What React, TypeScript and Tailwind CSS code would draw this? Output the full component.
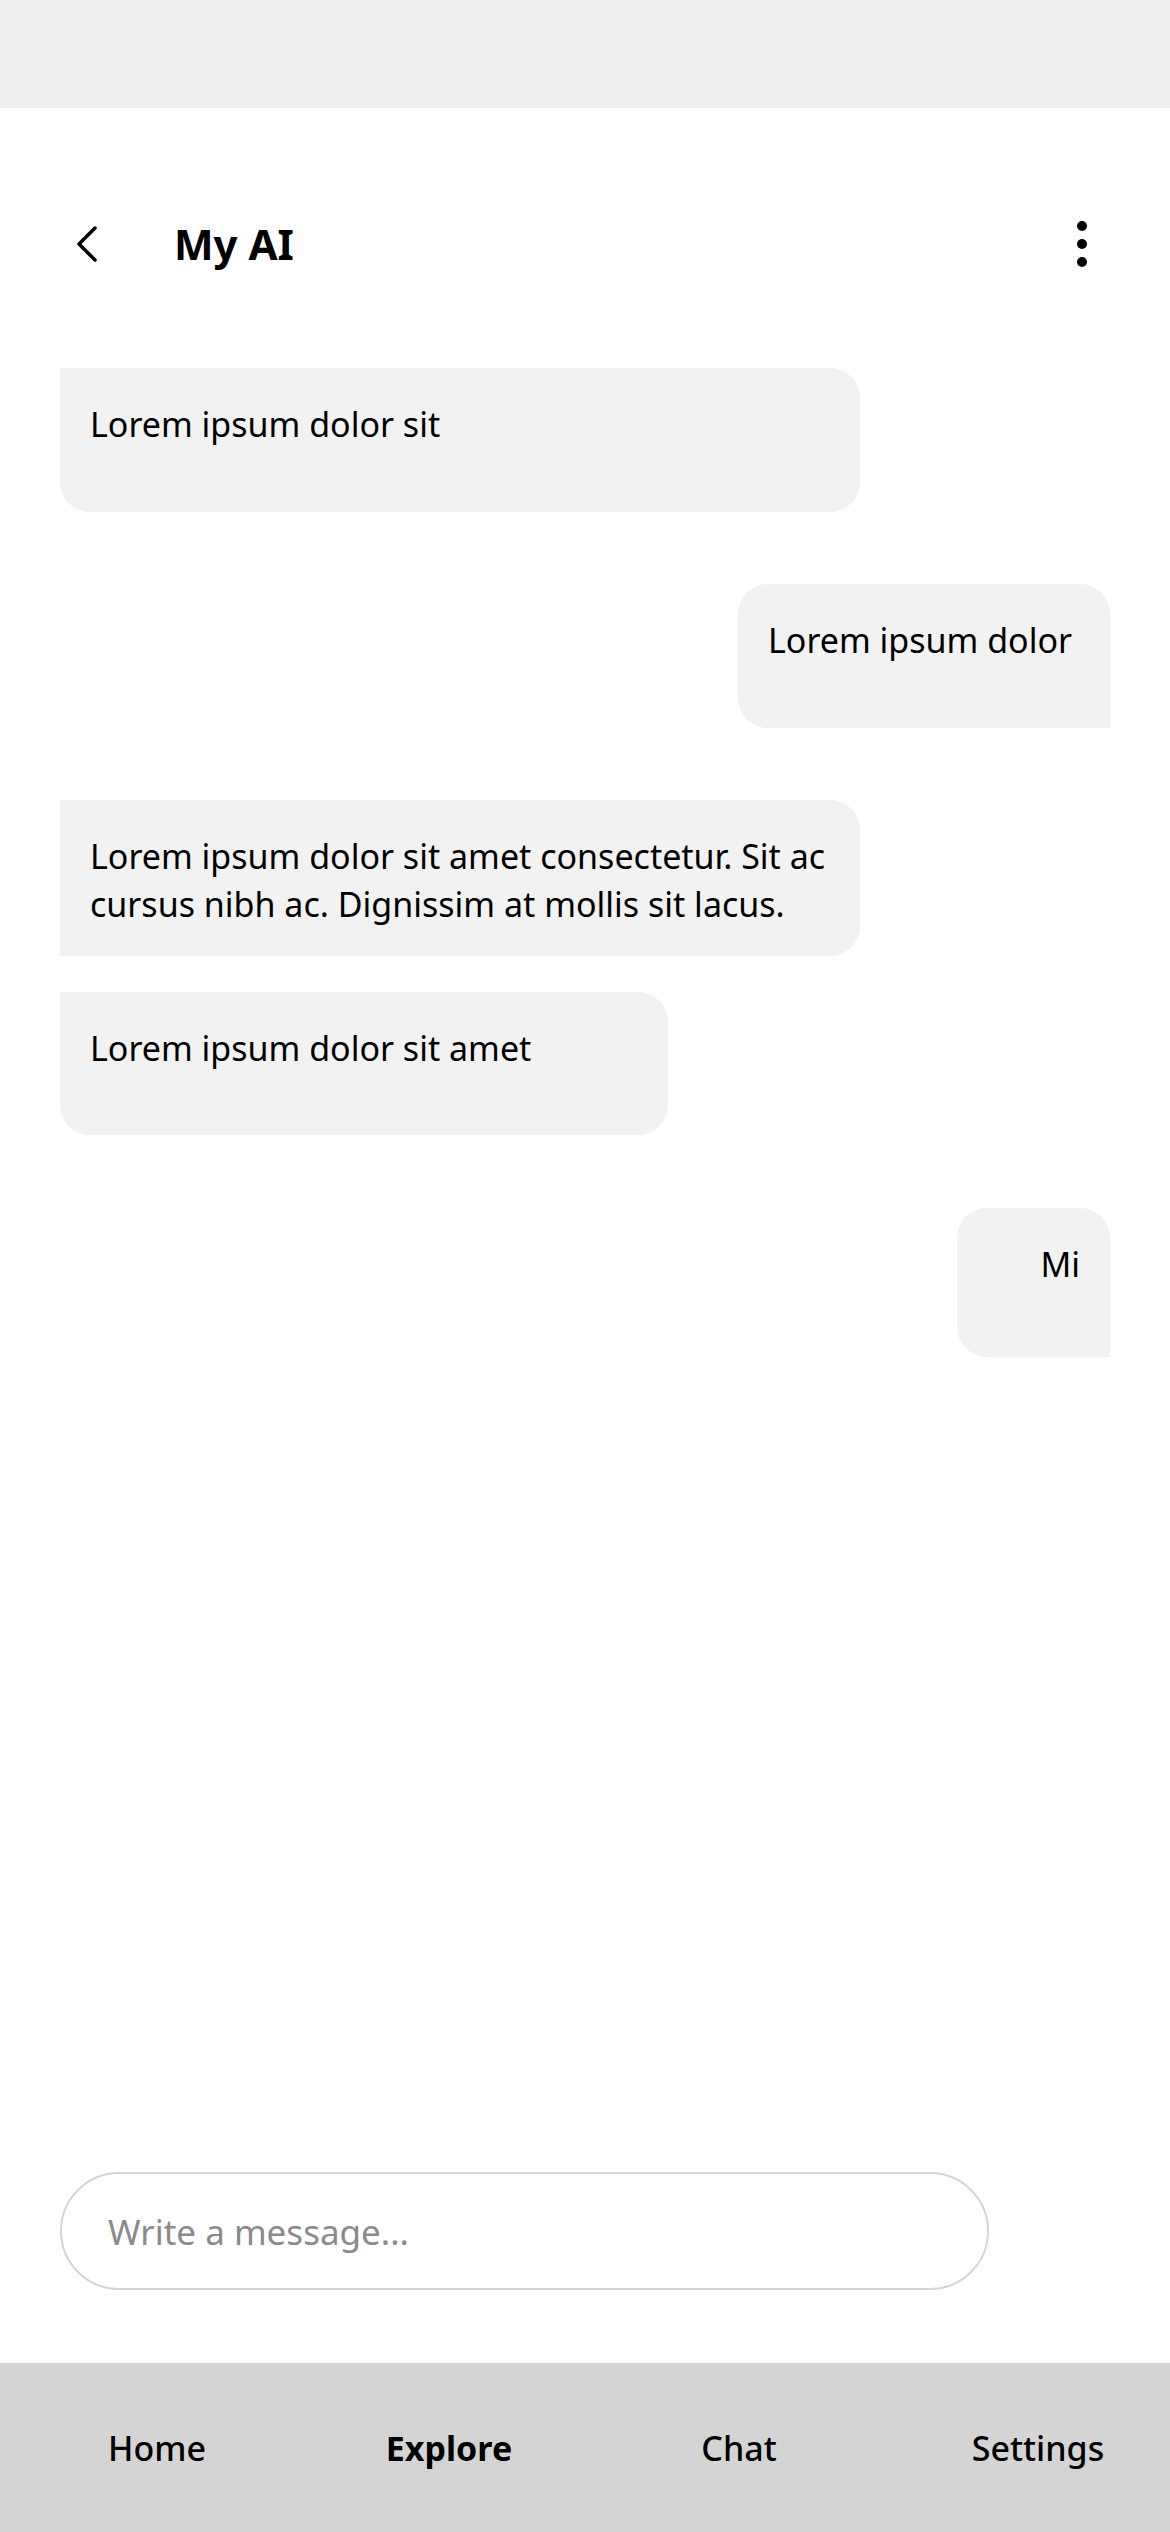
const font = { fontFamily: '"Noto Sans", "Open Sans", sans-serif' };

type Msg = {
  text: React.ReactNode;
  side: "left" | "right";
  width: string;
  corners: string;
  extra?: string;
};

const messages: Msg[] = [
  {
    text: "Lorem ipsum dolor sit",
    side: "left",
    width: "w-[800px]",
    corners: "rounded-tr-[30px] rounded-bl-[30px] rounded-br-[30px]",
    extra: "min-h-[144px]",
  },
  {
    text: "Lorem ipsum dolor",
    side: "right",
    width: "w-[372px]",
    corners: "rounded-tl-[30px] rounded-tr-[30px] rounded-bl-[30px]",
    extra: "min-h-[144px] mt-[72px]",
  },
  {
    text: (
      <>
        Lorem ipsum dolor sit amet consectetur. Sit ac
        <br />
        cursus nibh ac. Dignissim at mollis sit lacus.
      </>
    ),
    side: "left",
    width: "w-[800px]",
    corners: "rounded-tr-[30px] rounded-br-[30px]",
    extra: "mt-[72px] whitespace-nowrap",
  },
  {
    text: "Lorem ipsum dolor sit amet",
    side: "left",
    width: "w-[608px]",
    corners: "rounded-tr-[30px] rounded-bl-[30px] rounded-br-[30px]",
    extra: "min-h-[143px] mt-[36px]",
  },
  {
    text: "Mi",
    side: "right",
    width: "w-[153px]",
    corners: "rounded-tl-[30px] rounded-tr-[30px] rounded-bl-[30px]",
    extra: "min-h-[149px] mt-[73px] text-right",
  },
];

const Bubble = ({ msg }: { msg: Msg }) => (
  <div
    className={`${msg.side === "right" ? "self-end" : "self-start"} ${msg.width} ${msg.corners} ${msg.extra ?? ""} bg-[#f2f2f2] px-[30px] pt-[32px] pb-[28px] text-[34px] leading-[48px] text-black`}
  >
    {msg.text}
  </div>
);

const App = () => {
  return (
    <div className="w-[1170px] h-[2532px] flex flex-col bg-white overflow-hidden" style={font}>
      <div className="h-[108px] shrink-0 bg-[#efefef]" />

      {/* header */}
      <div className="mt-[92px] h-[88px] shrink-0 flex items-center pl-[76px] pr-[83px]">
        <svg width="22" height="36" viewBox="0 0 22 36" fill="none">
          <path d="M19 2 L3 18 L19 34" stroke="black" strokeWidth="3.5" strokeLinecap="round" strokeLinejoin="round" />
        </svg>
        <h1 className="ml-[76px] text-[42px] font-bold leading-none text-black">My AI</h1>
        <div className="ml-auto flex flex-col items-center gap-[8px] w-[10px]">
          <span className="w-[10px] h-[10px] rounded-full bg-black" />
          <span className="w-[10px] h-[10px] rounded-full bg-black" />
          <span className="w-[10px] h-[10px] rounded-full bg-black" />
        </div>
      </div>

      {/* messages */}
      <div className="mt-[80px] px-[60px] flex flex-col">
        {messages.map((m, i) => (
          <Bubble key={i} msg={m} />
        ))}
      </div>

      <div className="flex-1" />

      {/* input */}
      <div className="px-[60px] pb-[73px]">
        <div className="w-[929px] h-[118px] rounded-full border-2 border-[#d4d4d4] flex items-center pl-[46px] pt-[2px]">
          <input
            className="w-full bg-transparent outline-none text-[35px] text-black placeholder:text-[#8a8a8a]"
            placeholder="Write a message..."
            style={font}
          />
        </div>
      </div>

      {/* bottom nav */}
      <nav className="h-[169px] shrink-0 bg-[#d4d4d4] flex items-center pl-[57px] pt-[2px] text-[34px] text-black">
        <div className="w-[200px] text-center font-medium">Home</div>
        <div className="w-[200px] ml-[92px] text-center font-bold">Explore</div>
        <div className="w-[200px] ml-[90px] text-center font-medium">Chat</div>
        <div className="w-[200px] ml-[99px] text-center font-medium">Settings</div>
      </nav>
    </div>
  );
};

export default App;
